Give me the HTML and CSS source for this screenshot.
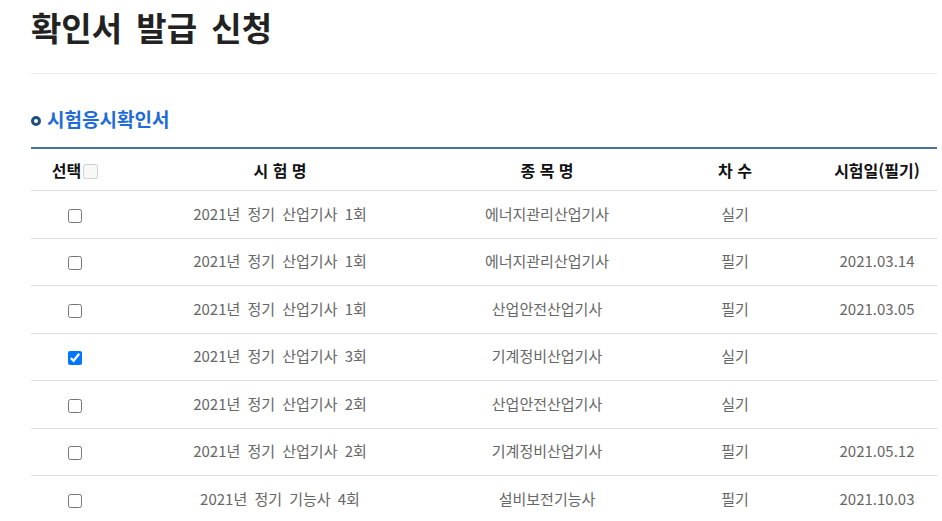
FILE: index.html
```html
<!DOCTYPE html>
<html lang="ko">
<head>
    <meta charset="UTF-8">
    <meta name="viewport" content="width=device-width, initial-scale=1.0">
    <title>확인서 발급 신청</title>
    <link rel="stylesheet" href="styles.css">
</head>
<body>
    <div class="container">
        <h1 class="page-title">확인서 발급 신청</h1>
        <h2 class="section-title"><span class="bullet"></span>시험응시확인서</h2>
        <table class="exam-table">
            <colgroup>
                <col class="col-check">
                <col class="col-name">
                <col class="col-item">
                <col class="col-round">
                <col class="col-date">
            </colgroup>
            <thead>
                <tr>
                    <th>선택<input type="checkbox" class="check-all" disabled></th>
                    <th>시 험 명</th>
                    <th>종 목 명</th>
                    <th>차 수</th>
                    <th>시험일(필기)</th>
                </tr>
            </thead>
            <tbody>
                <tr>
                    <td><input type="checkbox"></td>
                    <td>2021년 정기 산업기사 1회</td>
                    <td>에너지관리산업기사</td>
                    <td>실기</td>
                    <td></td>
                </tr>
                <tr>
                    <td><input type="checkbox"></td>
                    <td>2021년 정기 산업기사 1회</td>
                    <td>에너지관리산업기사</td>
                    <td>필기</td>
                    <td>2021.03.14</td>
                </tr>
                <tr>
                    <td><input type="checkbox"></td>
                    <td>2021년 정기 산업기사 1회</td>
                    <td>산업안전산업기사</td>
                    <td>필기</td>
                    <td>2021.03.05</td>
                </tr>
                <tr>
                    <td><input type="checkbox" checked></td>
                    <td>2021년 정기 산업기사 3회</td>
                    <td>기계정비산업기사</td>
                    <td>실기</td>
                    <td></td>
                </tr>
                <tr>
                    <td><input type="checkbox"></td>
                    <td>2021년 정기 산업기사 2회</td>
                    <td>산업안전산업기사</td>
                    <td>실기</td>
                    <td></td>
                </tr>
                <tr>
                    <td><input type="checkbox"></td>
                    <td>2021년 정기 산업기사 2회</td>
                    <td>기계정비산업기사</td>
                    <td>필기</td>
                    <td>2021.05.12</td>
                </tr>
                <tr>
                    <td><input type="checkbox"></td>
                    <td>2021년 정기 기능사 4회</td>
                    <td>설비보전기능사</td>
                    <td>필기</td>
                    <td>2021.10.03</td>
                </tr>
            </tbody>
        </table>
    </div>
</body>
</html>
```

FILE: styles.css
```css
body {
    margin: 0;
    font-family: "Noto Sans CJK KR", "Noto Sans", sans-serif;
    background-color: #fff;
    overflow: hidden;
}
.container {
    width: 906px;
    margin-left: 31px;
}
.page-title {
    margin: 0;
    padding-top: 3px;
    padding-bottom: 21px;
    font-size: 33px;
    line-height: 49px;
    font-weight: 700;
    word-spacing: 5px;
    color: #222;
    border-bottom: 1px solid #ebebeb;
}
.section-title {
    display: flex;
    align-items: center;
    margin: 0;
    padding-top: 30px;
    padding-bottom: 13px;
    font-size: 19px;
    line-height: 30px;
    font-weight: 700;
    color: #1f6bd8;
}
.bullet {
    width: 4px;
    height: 4px;
    border: 3px solid #1f4f7c;
    border-radius: 50%;
    margin-right: 6px;
    margin-top: 3px;
}
.exam-table {
    width: 100%;
    border-collapse: collapse;
    table-layout: fixed;
    border-top: 2px solid #4a7399;
}
.col-check { width: 88px; }
.col-name { width: 322px; }
.col-item { width: 212px; }
.col-round { width: 164px; }
.col-date { width: 120px; }
.exam-table th {
    height: 41px;
    padding: 0;
    font-size: 16px;
    font-weight: 700;
    color: #111;
    border-bottom: 1px solid #ddd;
}
.exam-table td {
    height: 44.5px;
    padding: 0 0 2px;
    text-align: center;
    font-size: 15px;
    word-spacing: 3px;
    color: #666;
    border-bottom: 1px solid #ddd;
}
.exam-table input[type="checkbox"] {
    width: 14px;
    height: 14px;
    margin: 0;
    vertical-align: middle;
}
.check-all {
    width: 15px !important;
    height: 15px !important;
    margin-left: 2px !important;
    position: relative;
    top: -1px;
}
```
